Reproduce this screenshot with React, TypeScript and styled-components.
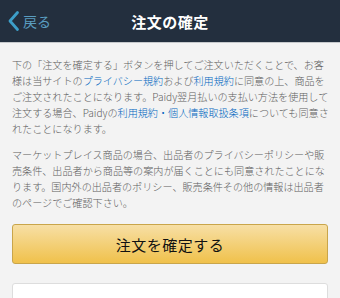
import React from 'react'
import { styled, createGlobalStyle } from 'styled-components'

const GlobalStyle = createGlobalStyle`
    html, body {
        margin: 0;
        padding: 0;
        background: #f3f3f3;
    }
    body {
        font-family: "Noto Sans CJK JP", "Noto Sans", sans-serif;
    }
`

const App = () => {
    return (
        <>
            <GlobalStyle />
            <Header>
                <BackButton>
                    <svg width="13" height="22" viewBox="0 0 13 22">
                        <path d="M10.5 2.5 L3 11 L10.5 19.5" fill="none" stroke="#3d9fc9" strokeWidth="2.8" strokeLinecap="round" strokeLinejoin="round" />
                    </svg>
                    <span>戻る</span>
                </BackButton>
                <Title>注文の確定</Title>
            </Header>

            <Content>
                <Notice>
                    下の「注文を確定する」ボタンを押してご注文いただくことで、お客<br />
                    様は当サイトの<Link>プライバシー規約</Link>および<Link>利用規約</Link>に同意の上、商品を<br />
                    ご注文されたことになります。Paidy翌月払いの支払い方法を使用して<br />
                    注文する場合、Paidyの<Link>利用規約・個人情報取扱条項</Link>についても同意さ<br />
                    れたことになります。
                </Notice>

                <Notice>
                    マーケットプレイス商品の場合、出品者のプライバシーポリシーや販<br />
                    売条件、出品者から商品等の案内が届くことにも同意されたことにな<br />
                    ります。国内外の出品者のポリシー、販売条件その他の情報は出品者<br />
                    のページでご確認下さい。
                </Notice>

                <ConfirmButton>注文を確定する</ConfirmButton>

                <Card />
            </Content>
        </>
    )
}

const Header = styled.div`
    height: 42px;
    background-color: #232f3e;
    border-bottom: 1px solid #c6c9cc;
    display: flex;
    align-items: center;
    justify-content: center;
    position: relative;
`

const BackButton = styled.div`
    position: absolute;
    left: 7px;
    top: 0;
    height: 42px;
    display: flex;
    align-items: center;
    gap: 3px;
    color: #5a9dc0;
    font-size: 14px;

    & svg {
        display: block;
    }
`

const Title = styled.div`
    color: #ffffff;
    font-size: 15px;
    font-weight: 700;
    letter-spacing: 0.5px;
`

const Content = styled.div`
    padding: 14px 12px 0;
    display: flex;
    flex-direction: column;
`

const Notice = styled.p`
    margin: 0 0 10px;
    font-size: 10.1px;
    font-weight: 300;
    line-height: 16px;
    color: #5e5e5e;
    white-space: nowrap;

    & + & {
        margin-bottom: 13px;
    }
`

const Link = styled.span`
    color: #0066c0;
`

const ConfirmButton = styled.div`
    height: 38px;
    border: 1px solid #c9a54a;
    border-radius: 3px;
    background: linear-gradient(to bottom, #f7dfa5, #f0c14b);
    display: flex;
    align-items: center;
    justify-content: center;
    font-size: 15px;
    color: #111111;
    letter-spacing: 0.5px;
`

const Card = styled.div`
    margin-top: 19px;
    height: 40px;
    background: #ffffff;
    border: 1px solid #dddddd;
    border-radius: 3px;
`

export default App
